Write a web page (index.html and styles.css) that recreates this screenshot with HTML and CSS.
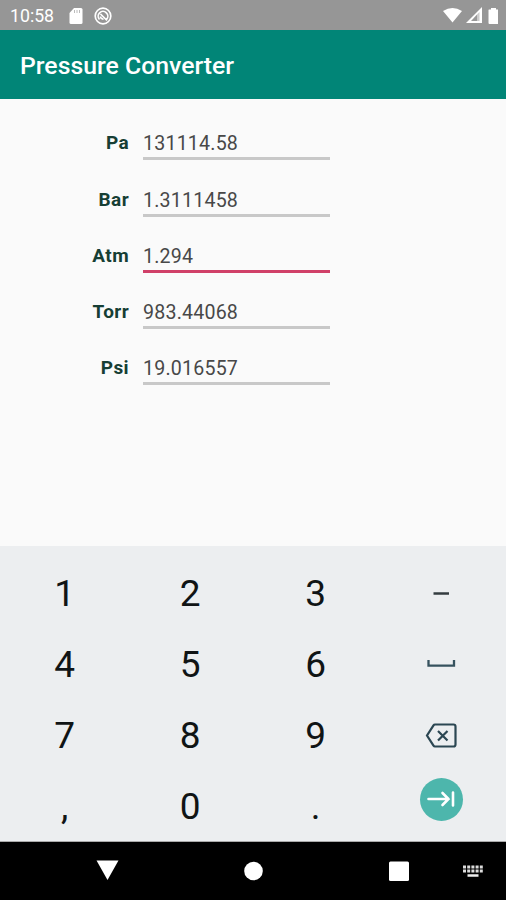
FILE: index.html
```html
<!DOCTYPE html>
<html lang="en">
<head>
<meta charset="utf-8">
<title>Pressure Converter</title>
<link rel="stylesheet" href="styles.css">
</head>
<body>
<div class="phone">
  <div class="status">
    <span class="clock">10:58</span>
    <svg class="sd" width="14" height="16" viewBox="0 0 14 16"><path fill="#fff" d="M5 0h7a1.500 1.500 0 0 1 1.500 1.500v13a1.500 1.500 0 0 1-1.500 1.500H2a1.500 1.500 0 0 1-1.500-1.500V5z"/><path stroke="#bbb" stroke-width="1" d="M5.500 2v3M8 2v3M10.500 2v3"/></svg>
    <svg class="ring" width="18" height="18" viewBox="0 0 18 18" fill="none" stroke="#fff" stroke-width="1.700"><circle cx="9" cy="9" r="7.800"/><path d="M5.500 12.500a4.800 4.800 0 1 1 7 0M6.500 7l6.500 6.500M6.500 9.500a2.500 2.500 0 0 0 3 2.500"/></svg>
    <span class="spacer"></span>
    <svg width="55" height="18" viewBox="0 0 55 18"><path fill="#fff" d="M0 4Q9.500-2 19 4L9.500 15.500zM39 0v16H23z"/><path fill="#999" d="M34.500 7v7h-6.500z"/><path fill="#ccc" d="M34.500 7l2-2v9h-2z"/><path fill="#fff" d="M48 1h5v1.500h2q.5 0 .5.500v13q0 1-1 1h-8q-1 0-1-1V3q0-.5.500-.5h2z"/></svg>
  </div>
  <header class="bar"><h1>Pressure Converter</h1></header>
  <main class="form">
    <label class="row"><span class="name">Pa</span><span class="field">131114.58</span></label>
    <label class="row"><span class="name">Bar</span><span class="field">1.3111458</span></label>
    <label class="row"><span class="name">Atm</span><span class="field active">1.294</span></label>
    <label class="row"><span class="name">Torr</span><span class="field">983.44068</span></label>
    <label class="row"><span class="name">Psi</span><span class="field">19.016557</span></label>
  </main>
  <section class="keys">
    <span>1</span><span>2</span><span>3</span><span><svg width="36" height="30" viewBox="0 0 36 30"><path d="M10.500 14.500h15.500" stroke="#343c40" stroke-width="2.500"/></svg></span>
    <span>4</span><span>5</span><span>6</span><span><svg width="36" height="30" viewBox="0 0 36 30" fill="none" stroke="#36525e" stroke-width="2.300"><path d="M5.500 10v5.700h25.500V10"/></svg></span>
    <span>7</span><span>8</span><span>9</span><span><svg width="36" height="30" viewBox="0 0 36 30" fill="none" stroke="#2b4652" stroke-width="2.200"><path d="M12 3.500h18.500q2 0 2 2v18q0 2-2 2H12q-1 0-1.500-.8L4 14.500l6.500-10.200q.5-.8 1.500-.8zM15 10l9.500 9.500M24.500 10L15 19.500"/></svg></span>
    <span>,</span><span>0</span><span>.</span><span><span class="next"><svg width="30" height="20" viewBox="0 0 30 20" fill="none" stroke="#fff" stroke-width="2.600" stroke-linecap="round"><path d="M2.500 10h20M16.500 4l6 6-6 6M27 3.500v13"/></svg></span></span>
  </section>
  <nav class="nav">
    <svg width="506" height="58" viewBox="0 0 506 58"><path fill="#fff" d="M96.500 18.500h22L107.500 38z"/><circle cx="253.500" cy="29" r="9.300" fill="#fff"/><rect x="389" y="19.500" width="20" height="19.500" rx="1.500" fill="#fff"/><path stroke="#ddd" stroke-width="3" stroke-dasharray="3 1.200" d="M463 25h20M463 29h20"/><path stroke="#eee" stroke-width="2.500" d="M467.500 33.500h11"/></svg>
  </nav>
</div>
</body>
</html>
```
FILE: styles.css
```css
* { box-sizing: border-box; }
body { margin: 0; font-family: Roboto, sans-serif; }
.phone { width: 506px; height: 900px; display: flex; flex-direction: column; background: #fafafa; overflow: hidden; }
.status { height: 30px; background: #969696; color: #fff; display: flex; align-items: center; padding: 1px 8px 0 10px; font-size: 17.7px; }
.clock { width: 59px; }
.ring { margin-left: 11px; }
.spacer { flex: 1; }
.bar { height: 69px; background: #018577; display: flex; align-items: center; padding: 2px 0 0 20px; }
h1 { margin: 0; font-size: 24.8px; font-weight: 500; color: #fff; }
.form { height: 447px; padding-top: 23.4px; }
.row { display: flex; height: 56.2px; }
.name { width: 129px; text-align: right; font-weight: 700; font-size: 19px; letter-spacing: .4px; line-height: 42px; color: #163e34; }
.field { margin-left: 14px; width: 187px; height: 38px; border-bottom: 3px solid #c8c8c8; font-size: 19.6px; font-weight: 400; line-height: 43.5px; letter-spacing: .2px; color: #484848; }
.active { border-color: #d04068; }
.keys { height: 296px; background: #eceef0; display: grid; grid-template-columns: repeat(4, 125.5px); grid-template-rows: repeat(4, 71px); padding: 12px 0 0 2px; font-size: 37px; color: #101415; border-bottom: 1px solid #aaa; }
.keys > span { display: flex; align-items: center; justify-content: center; }
.next { width: 43px; height: 43px; border-radius: 50%; background: #4db6ac; display: flex; align-items: center; justify-content: center; margin-top: -15px; }
.nav { height: 58px; background: #000; }
svg { display: block; flex: none; }
```
